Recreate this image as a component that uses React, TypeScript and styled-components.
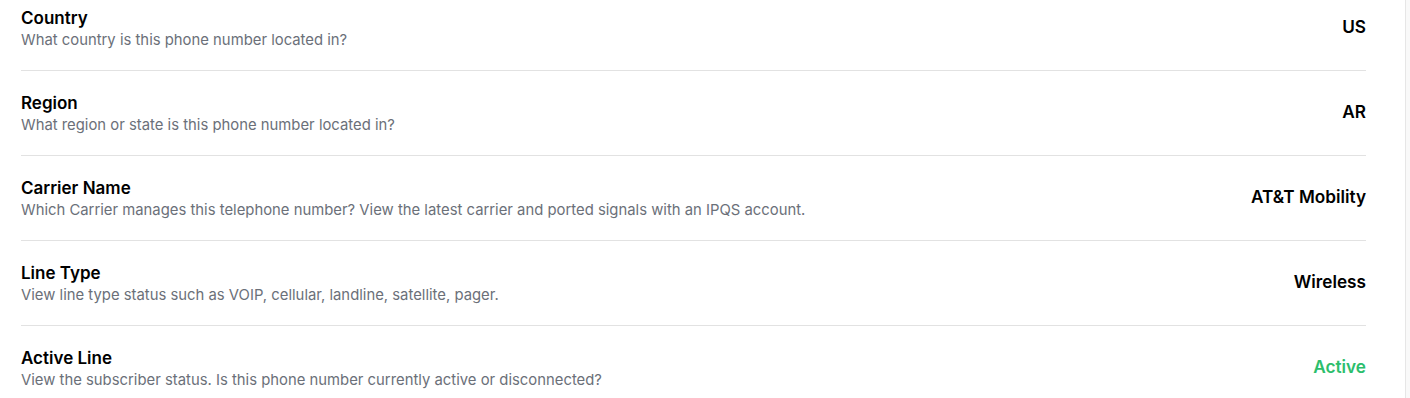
import styled, { createGlobalStyle } from 'styled-components';

const GlobalStyle = createGlobalStyle`
  html, body {
    margin: 0;
    padding: 0;
    background: #fff;
    font-family: Inter, 'Noto Sans', sans-serif;
    overflow: hidden;
  }
`;

const Page = styled.div`
  display: flex;
  height: 398px;
`;
const Main = styled.div`
  flex: 1;
  padding: 0 39px 0 21px;
  overflow: hidden;
`;
const Gutter = styled.div`
  width: 4px;
  border-left: 1px solid #e6e6e6;
  background: #f9f9f9;
`;
const List = styled.div`
  margin-top: -14px;
`;
const Row = styled.div`
  display: flex;
  align-items: center;
  justify-content: space-between;
  padding: 20px 0;
  border-bottom: 1px solid #e2e2e2;
`;
const Texts = styled.div`
  display: flex;
  flex-direction: column;
`;
const Title = styled.div`
  font-size: 17px;
  line-height: 24px;
  font-weight: 600;
  color: #000;
`;
const Describe = styled.div`
  font-size: 14.85px;
  line-height: 20px;
  color: #6b7079;
`;
const Value = styled.div<{ $good?: boolean }>`
  font-size: 17.2px;
  line-height: 24px;
  font-weight: 600;
  margin-bottom: 3px;
  color: ${(p) => (p.$good ? '#2cbe6c' : '#000')};
`;

const rows = [
  { title: 'Country', text: 'What country is this phone number located in?', value: 'US' },
  { title: 'Region', text: 'What region or state is this phone number located in?', value: 'AR' },
  {
    title: 'Carrier Name',
    text: 'Which Carrier manages this telephone number? View the latest carrier and ported signals with an IPQS account.',
    value: 'AT&T Mobility',
  },
  {
    title: 'Line Type',
    text: 'View line type status such as VOIP, cellular, landline, satellite, pager.',
    value: 'Wireless',
  },
  {
    title: 'Active Line',
    text: 'View the subscriber status. Is this phone number currently active or disconnected?',
    value: 'Active',
    good: true,
  },
];

const App = () => {
  return (
    <>
      <GlobalStyle />
      <Page>
        <Main>
          <List>
            {rows.map((r) => (
              <Row key={r.title}>
                <Texts>
                  <Title>{r.title}</Title>
                  <Describe>{r.text}</Describe>
                </Texts>
                <Value $good={r.good}>{r.value}</Value>
              </Row>
            ))}
          </List>
        </Main>
        <Gutter />
      </Page>
    </>
  );
};

export default App;
